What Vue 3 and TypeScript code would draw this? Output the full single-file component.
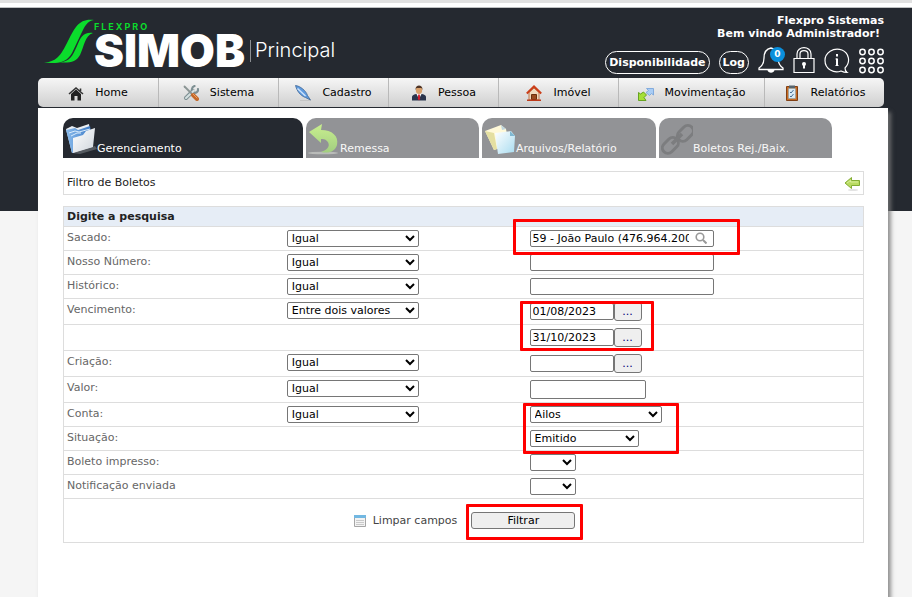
<script setup lang="ts">
import { ref } from 'vue'

type Mark = 'payer' | 'period' | 'account'
interface Row {
  id: string
  label: string
  compare?: string
  kind: 'search' | 'text' | 'date' | 'amount' | 'select'
  size?: 'large' | 'medium' | 'small'
  value: string
  tall?: boolean
  mark?: Mark
}

const menu = ['Home', 'Sistema', 'Cadastro', 'Pessoa', 'Imóvel', 'Movimentação', 'Relatórios']
const tabs = ['Gerenciamento', 'Remessa', 'Arquivos/Relatório', 'Boletos Rej./Baix.']
const operators = ['Igual', 'Diferente', 'Entre dois valores']

const initialRows = (): Row[] => [
  { id: 'sacado', label: 'Sacado:', compare: 'Igual', kind: 'search', value: '59 - João Paulo (476.964.200-00)', mark: 'payer' },
  { id: 'nosso', label: 'Nosso Número:', compare: 'Igual', kind: 'text', value: '' },
  { id: 'historico', label: 'Histórico:', compare: 'Igual', kind: 'text', value: '' },
  { id: 'vencimento', label: 'Vencimento:', compare: 'Entre dois valores', kind: 'date', value: '01/08/2023', tall: true, mark: 'period' },
  { id: 'vencimento-fim', label: '', kind: 'date', value: '31/10/2023', tall: true },
  { id: 'criacao', label: 'Criação:', compare: 'Igual', kind: 'date', value: '', tall: true },
  { id: 'valor', label: 'Valor:', compare: 'Igual', kind: 'amount', value: '', tall: true },
  { id: 'conta', label: 'Conta:', compare: 'Igual', kind: 'select', size: 'large', value: 'Ailos', mark: 'account' },
  { id: 'situacao', label: 'Situação:', kind: 'select', size: 'medium', value: 'Emitido' },
  { id: 'impresso', label: 'Boleto impresso:', kind: 'select', size: 'small', value: '' },
  { id: 'notificacao', label: 'Notificação enviada', kind: 'select', size: 'small', value: '' },
]

const rows = ref<Row[]>(initialRows())

function clearFields() {
  rows.value.forEach((row) => {
    row.value = ''
    if (row.compare) row.compare = 'Igual'
  })
}
</script>

<template>
  <div class="page">
    <header class="top">
      <div class="brand">
        <svg class="brand-mark" viewBox="0 0 52 44" aria-hidden="true">
          <path fill="#0bdc2c" d="M50 1C35-1 31 9 25 20C18 34 14 43 0 43.500C14 45 22 44 28 34L37 15C41 7 43 2 50 1Z" />
          <path fill="#0bdc2c" d="M49 14C39 13 37 18 33 27C28 38 26 42 16 43.500C27 44 32 43 36 36C40 28 41 16 49 14Z" />
        </svg>
        <div class="brand-words">
          <span class="brand-top">FLEXPRO</span>
          <span class="brand-name">SIMOB</span>
        </div>
        <span class="brand-bar"></span>
        <span class="brand-page">Principal</span>
      </div>
      <div class="user">
        <p class="user-text">Flexpro Sistemas</p>
        <p class="user-text user-hello">Bem vindo Administrador!</p>
        <div class="tools">
          <button class="pill" type="button">Disponibilidade</button>
          <button class="pill" type="button">Log</button>
          <button class="tool" type="button" aria-label="Notificações">
            <svg width="26" height="28" viewBox="0 0 26 28" fill="none" stroke="#fff" stroke-width="1.300">
              <path d="M13 2C8 3 6 7 6 12C6 17 4 20 1 22V23.500H25V22C22 20 20 17 20 12C20 7 18 3 13 2Z" />
              <path fill="#fff" stroke="none" d="M9.500 24H16.500C16 27.500 10 27.500 9.500 24Z" />
            </svg>
            <span class="badge">0</span>
          </button>
          <button class="tool" type="button" aria-label="Bloquear">
            <svg width="22" height="28" viewBox="0 0 22 28" fill="none" stroke="#fff">
              <path stroke-width="1.200" d="M1 12.500H21V26.500H1ZM4 12V8C4-.500 18-.500 18 8V12M7 12V8C7 3.500 15 3.500 15 8V12" />
              <circle cx="11" cy="18" r="2" fill="#fff" stroke="none" />
              <path stroke-width="2" d="M11 18V22.500" />
            </svg>
          </button>
          <button class="tool" type="button" aria-label="Informações">
            <svg width="26" height="26" viewBox="0 0 26 26" fill="none" stroke="#fff">
              <path stroke-width="1.200" d="M21 20C27 14 25 5 18 2C9-1 1 5 1 12.500C1 21 10 26 17 23C19 24 21 24.500 23 24.500C21 23 21 22 21 20Z" />
              <path stroke-width="2" d="M13 6V8.500M13 10.500V18" />
              <path d="M11.500 11H13M11.500 17.500H14.500" />
            </svg>
          </button>
          <button class="tool" type="button" aria-label="Aplicativos">
            <svg width="25" height="26" viewBox="0 0 25 26" fill="none" stroke="#fff" stroke-width="1.500">
              <template v-for="y in [4, 13, 22]" :key="y">
                <circle v-for="x in [3.500, 12.500, 21.500]" :key="x" :cx="x" :cy="y" r="2.700" />
              </template>
            </svg>
          </button>
        </div>
      </div>
    </header>

    <nav class="menu">
      <a v-for="(item, i) in menu" :key="item" class="menu-item" href="#">
        <svg class="menu-icon" viewBox="0 0 16 16" aria-hidden="true">
          <g v-if="i === 0">
            <path fill="#222" d="M3 9L8 4.500L13 9V15.500H9.500V11H6.500V15.500H3Z" />
            <path fill="none" stroke="#333" stroke-width="1.600" d="M1 9L8 3L15 9M12.500 3.500V6" />
          </g>
          <g v-else-if="i === 1" fill="none" stroke-linecap="round">
            <path stroke="#7d8f92" stroke-width="4" d="M3 13L10 6" />
            <path stroke="#7d8f92" stroke-width="2.200" d="M11.500 1C8.500 2 8 6 10.500 7.500C13 8.500 15.500 6.500 15 4" />
            <path stroke="#d5e1e1" stroke-width="2" d="M3 13L11 5.500" />
            <path stroke="#8b9594" stroke-width="1.800" d="M1.500 1.500L9 9" />
            <path stroke="#c3682a" stroke-width="4" d="M10 10L14 14" />
            <path stroke="#f0a15f" stroke-width="1" d="M10 9L14 13" />
          </g>
          <g v-else-if="i === 2">
            <path fill="#c5c5c5" d="M5 15H16V16H5Z" />
            <path fill="#5f9be0" stroke="#416896" stroke-width=".800" d="M.500.500C5 1 11 5.500 12.500 10.500L15.500 15L10.500 12.500C5 10.500 2 6 .500.500Z" />
            <path fill="none" stroke="#cfe4fb" stroke-width="1.400" d="M2.500 3.500L10.500 11" />
          </g>
          <g v-else-if="i === 3">
            <path fill="#29344c" d="M1 15.500V12Q1 10 5 9H11Q15 10 15 12V15.500Z" />
            <path fill="#fff" d="M5.500 9H10.500L8 14Z" />
            <path fill="#d1192b" d="M7.200 9.500H8.800L9.200 14L8 15.500L6.800 14Z" />
            <ellipse cx="8" cy="5" rx="3.200" ry="4" fill="#d9a06b" />
            <path fill="#4e3425" d="M4.500 5C4-1 12-1 11.500 5L10.500 3H5.500Z" />
          </g>
          <g v-else-if="i === 4">
            <path fill="#efd9bc" stroke="#be7950" d="M3 7.500L8 3L13 7.500V15H3Z" />
            <path fill="none" stroke="#cb3e19" stroke-width="2" d="M.800 8.500L8 1.500L15.200 8.500" />
            <path fill="#9a4c20" stroke="#6b300d" d="M5.500 9.500H10.500V14.500H5.500Z" />
            <path fill="#bd3a1a" d="M1 14.500H15V16H1Z" />
          </g>
          <g v-else-if="i === 5">
            <path fill="#a9cdf5" stroke="#7ba6da" stroke-width=".900" d="M8.500 3.500H15.500V10L13.500 8.500L11.500 10.500L8 7.500L10.500 5.500Z" />
            <path fill="#a5df38" stroke="#5c9c15" stroke-width=".900" d="M.500 7.500L2.500 9L5.500 7L8.500 10L6 12.500L8 15.500H.500Z" />
          </g>
          <g v-else>
            <path fill="#c76b22" stroke="#814015" d="M2.500 1.500H13.500V15.500H2.500Z" />
            <path fill="#d9ebf6" stroke="#8e9da3" stroke-width=".600" d="M4.500 3.500H11.500V13.500H4.500Z" />
            <path fill="#56646d" d="M5 .500H11V3H5Z" />
            <path fill="none" stroke="#456d92" d="M6 7L7 8L9.500 5M6 11L7 12L9.500 9" />
          </g>
        </svg>
        <span>{{ item }}</span>
      </a>
    </nav>

    <main class="panel">
      <div class="tabs" role="tablist">
        <button v-for="(tab, i) in tabs" :key="tab" class="tab" :class="{ active: i === 0 }" type="button" role="tab" :aria-selected="i === 0">
          <svg class="tab-icon" viewBox="0 0 32 32" aria-hidden="true">
            <defs>
              <linearGradient id="folder-front" x2="1" y2="1"><stop stop-color="#fff" /><stop offset="1" stop-color="#cfd5dc" /></linearGradient>
              <linearGradient id="folder-back" x2="1" y2="0"><stop stop-color="#8bbcec" /><stop offset="1" stop-color="#3675c4" /></linearGradient>
              <linearGradient id="sheet-blue" x2="1" y2="1"><stop stop-color="#fff" /><stop offset="1" stop-color="#a9dcf0" /></linearGradient>
              <linearGradient id="green-turn" x2="0" y2="1"><stop stop-color="#c9ef8f" /><stop offset="1" stop-color="#a2ce80" /></linearGradient>
            </defs>
            <g v-if="i === 0">
              <path fill="#555a60" d="M7 30L30 23L32 26L15 31Z" />
              <path fill="#e9eef4" d="M1 6L7 3L12 5L24 1L27 24L7 30Z" />
              <path fill="url(#folder-back)" d="M1 7L10 5L13 7L25 3L28 22L7 30Z" />
              <path fill="none" stroke="#d9ebfb" d="M4 10L10 8L14 9L25 6M6 13L12 10L16 10" />
              <path fill="url(#folder-front)" d="M8 15L18 12L21 8L30 5L28 24L8 30Z" />
            </g>
            <g v-else-if="i === 1">
              <ellipse cx="15" cy="30" rx="15" ry="1.300" fill="#b9bbb9" />
              <path fill="url(#green-turn)" d="M1 9L14 1L13 7C24 7 31 13 29 22C27 28 22 31 13 29C20 27 23 22 19 18C17 16 15 16 13 16V20Z" />
            </g>
            <g v-else-if="i === 2">
              <path fill="#fff9d9" d="M1 8L17 2L22 6L25 22L10 27Z" />
              <path fill="#e4dfa1" d="M1 8L10 27L13 26L10 10Z" />
              <path fill="url(#sheet-blue)" d="M11 10L27 8L31 13L30 29L14 31Z" />
              <path fill="#7fb8d2" d="M26 8L31 13L26 13Z" />
              <path fill="#bed5de" d="M17 2L22 6L18 7Z" />
            </g>
            <g v-else fill="none" stroke="#7c7d7f" stroke-width="3">
              <rect x="15" y="5" width="18" height="11" rx="5.500" transform="rotate(-45 24 10)" />
              <rect x="0" y="17" width="18" height="11" rx="5.500" transform="rotate(-45 9 22)" />
              <path stroke-width="3.500" d="M11 21L21 11" />
            </g>
          </svg>
          <span>{{ tab }}</span>
        </button>
      </div>

      <div class="title-box">
        <h1 class="title">Filtro de Boletos</h1>
        <a href="#" aria-label="Voltar" class="back">
          <svg width="16" height="16" viewBox="0 0 16 16">
            <ellipse cx="9" cy="14" rx="5" ry="1" fill="#e3e3e3" />
            <path fill="#b9db61" stroke="#83ad35" d="M1 7L7.500 1.500V4.500H15.500V9.500H7.500V12.500Z" />
            <path fill="none" stroke="#d9ef9c" d="M3 7L6.500 4.500V6H14" />
          </svg>
        </a>
      </div>

      <form @submit.prevent>
        <table class="filters">
          <colgroup>
            <col class="col-label" />
            <col class="col-compare" />
            <col />
          </colgroup>
          <thead>
            <tr><th colspan="3">Digite a pesquisa</th></tr>
          </thead>
          <tbody>
            <tr v-for="row in rows" :key="row.id" :class="{ tall: row.tall }">
              <td><label v-if="row.label" class="label" :for="row.id">{{ row.label }}</label></td>
              <td>
                <select v-if="row.compare" v-model="row.compare" class="control large" :aria-label="'Operador ' + row.label">
                  <option v-for="op in operators" :key="op">{{ op }}</option>
                </select>
              </td>
              <td>
                <div class="field">
                  <select v-if="row.kind === 'select'" :id="row.id" v-model="row.value" class="control" :class="row.size">
                    <option value=""></option>
                    <option v-if="row.size === 'large'">Ailos</option>
                    <option v-else-if="row.size === 'medium'">Emitido</option>
                    <template v-else>
                      <option>Sim</option>
                      <option>Não</option>
                    </template>
                  </select>
                  <input v-else :id="row.id" v-model="row.value" type="text" class="control" :class="row.kind" :aria-label="row.label ? undefined : 'Vencimento final'" />
                  <svg v-if="row.kind === 'search'" class="lens" viewBox="0 0 12 12" fill="none" stroke="#999" aria-hidden="true">
                    <circle cx="5" cy="5" r="3.800" stroke-width="1.600" />
                    <path stroke-width="2" d="M8 8L11.500 11.500" />
                  </svg>
                  <button v-if="row.kind === 'date'" class="picker" type="button" aria-label="Abrir calendário">...</button>
                  <span v-if="row.mark" class="mark" :class="'mark-' + row.mark"></span>
                </div>
              </td>
            </tr>
          </tbody>
          <tfoot>
            <tr>
              <td colspan="3">
                <div class="actions">
                  <button class="clear" type="button" @click="clearFields">
                    <svg width="12" height="12" viewBox="0 0 12 12" aria-hidden="true">
                      <path fill="#f3f3f3" stroke="#a5a5a5" d="M.500.500H11.500V11.500H.500Z" />
                      <path fill="#72b8e2" d="M0 0H12V3H0Z" />
                      <path stroke="#c9c9c9" d="M2 5.500H10M2 7.500H10M2 9.500H10" />
                    </svg>
                    <span>Limpar campos</span>
                  </button>
                  <div class="field">
                    <button class="submit" type="submit">Filtrar</button>
                    <span class="mark mark-submit"></span>
                  </div>
                </div>
              </td>
            </tr>
          </tfoot>
        </table>
      </form>
    </main>
  </div>
</template>

<style>
body {
  background: #f5f5f5;
}
</style>

<style scoped>
* {
  box-sizing: border-box;
}
.page {
  display: flex;
  flex-direction: column;
  min-height: 100vh;
  padding: 0 24px 0 38px;
  border-top: 3px solid #e1e1e1;
  background: linear-gradient(#fff 4px, #bfc1c3 4px, #bfc1c3 5px, #252930 5px) 0 0 / 100% 208px no-repeat #f5f5f5;
  font-family: Verdana, 'DejaVu Sans', sans-serif;
  font-size: 11px;
  line-height: 13px;
  color: #222;
}
button,
input,
select {
  font: inherit;
}
button {
  cursor: pointer;
}

/* Header */
.top {
  display: flex;
  justify-content: space-between;
  height: 75px;
  padding: 11px 4px 0 6px;
}
.brand {
  display: flex;
  align-items: flex-start;
  color: #fff;
  white-space: nowrap;
}
.brand-mark {
  width: 52px;
  height: 44px;
  margin-top: 5px;
}
.brand-words {
  display: flex;
  flex-direction: column;
  width: 153px;
  margin-left: -2px;
  padding-top: 8px;
}
.brand-top {
  font-family: Inter, sans-serif;
  font-size: 9px;
  font-weight: 700;
  line-height: 9px;
  letter-spacing: 2px;
  color: #0bdc2c;
}
.brand-name {
  font-family: Inter, sans-serif;
  font-size: 45px;
  font-weight: 900;
  line-height: 39px;
}
.brand-bar {
  width: 1px;
  height: 22px;
  margin: 26px 4px 0 3px;
  background: #8b8e92;
}
.brand-page {
  margin-top: 24px;
  font-family: Inter, sans-serif;
  font-size: 20px;
  font-weight: 300;
  line-height: 24px;
}
.user {
  display: flex;
  flex-direction: column;
  align-items: flex-end;
  color: #fff;
}
.user-text {
  margin: 0;
  font-weight: bold;
}
.user-hello {
  padding-right: 4px;
}
.tools {
  display: flex;
  align-items: flex-end;
  gap: 9px;
  margin-top: 6px;
}
.pill {
  height: 23px;
  padding: 0 3px;
  border: 1px solid #fff;
  border-radius: 12px;
  background: none;
  color: #fff;
  font-weight: bold;
}
.tool {
  position: relative;
  display: flex;
  padding: 0;
  border: 0;
  background: none;
}
.badge {
  position: absolute;
  top: 1px;
  right: -1px;
  width: 15px;
  height: 15px;
  border-radius: 8px;
  background: #0a8fdc;
  color: #fff;
  font-size: 9px;
  font-weight: bold;
  line-height: 15px;
}

/* Main menu */
.menu {
  display: grid;
  grid-template-columns: 121fr 120fr 110fr 110fr 120fr 146fr 119fr;
  height: 29px;
  margin-right: 4px;
  border-radius: 5px;
  background: linear-gradient(#f6f6f6, #cfcfcf);
}
.menu-item {
  display: flex;
  align-items: center;
  justify-content: center;
  gap: 11px;
  border-right: 1px solid #b9b9b9;
  color: #000;
  text-decoration: none;
}
.menu-item:last-child {
  border-right: 0;
}
.menu-icon {
  width: 16px;
  height: 16px;
}

/* Content */
.panel {
  flex: 1;
  margin-top: 1px;
  padding: 10px 24px 54px 25px;
  background: #fff;
  box-shadow: 3px 4px 4px rgba(120, 120, 120, 0.8);
}
.tabs {
  display: grid;
  grid-template-columns: 240fr 173fr 174fr 173fr 29fr;
  gap: 3px;
}
.tab {
  display: flex;
  align-items: flex-end;
  height: 40px;
  padding: 0 0 3px 2px;
  border: 0;
  border-radius: 10px 10px 0 0;
  background: #929396;
  color: #f8f8f8;
  white-space: nowrap;
}
.tab.active {
  background: #252930;
  color: #fff;
}
.tab-icon {
  width: 32px;
  height: 32px;
}
.title-box {
  display: flex;
  justify-content: space-between;
  height: 24px;
  margin: 13px 0 11px;
  padding: 4px 3px;
  border: 1px solid #ddd;
}
.title {
  margin: 0;
  font-size: 11px;
  font-weight: normal;
}
.back {
  display: flex;
}
.filters {
  width: 100%;
  table-layout: fixed;
  border: 1px solid #ddd;
  border-spacing: 0;
}
.col-label {
  width: 27.5%;
}
.col-compare {
  width: 30.4%;
}
.filters th {
  height: 20px;
  padding: 0 3px;
  border-bottom: 1px solid #ddd;
  background: #e6edf6;
  text-align: left;
}
.filters td {
  height: 24px;
  padding: 3px 3px 0;
  border-bottom: 1px solid #ddd;
  vertical-align: top;
}
.filters .tall td {
  height: 26px;
}
.filters tfoot td {
  height: 43px;
  padding: 0;
  border-bottom: 0;
  vertical-align: middle;
}
.label {
  display: block;
  line-height: 15px;
  color: #666;
}
.field {
  position: relative;
  display: flex;
  align-items: center;
  width: max-content;
}
.control {
  display: block;
  height: 17px;
  margin: 0;
  padding: 0 2px;
  border: 1px solid #767676;
  border-radius: 2px;
  background-color: #fff;
  color: #000;
}
select.control {
  padding: 0;
}
.large {
  width: 132px;
}
.medium {
  width: 109px;
}
.small {
  width: 46px;
}
.text,
.search {
  width: 184px;
}
.search {
  padding-right: 24px;
}
.date {
  width: 84px;
}
.amount {
  width: 116px;
  height: 19px;
}
.lens {
  position: absolute;
  top: 2px;
  right: 7px;
  width: 12px;
  height: 12px;
}
.picker {
  width: 28px;
  height: 19px;
  padding: 0;
  border: 1px solid #767676;
  border-radius: 3px;
  background: #efefef;
  color: #00007a;
}
.actions {
  display: flex;
  align-items: center;
  justify-content: center;
  gap: 14px;
  padding-left: 2px;
}
.clear {
  display: flex;
  align-items: center;
  gap: 7px;
  padding: 0;
  border: 0;
  background: none;
  color: #444;
}
.submit {
  width: 104px;
  height: 17px;
  padding: 0;
  border: 1px solid #767676;
  border-radius: 3px;
  background: #efefef;
  color: #000;
}

/* Red frames laid over the fields to call attention to them */
.mark {
  position: absolute;
  z-index: 1;
  border: 3px solid #f00;
  border-radius: 1px;
  pointer-events: none;
}
.mark-payer {
  top: -11px;
  left: -17px;
  width: 227px;
  height: 36px;
}
.mark-period {
  top: -1px;
  left: -10px;
  width: 134px;
  height: 50px;
}
.mark-account {
  top: -3px;
  left: -7px;
  width: 156px;
  height: 51px;
}
.mark-submit {
  top: -8px;
  left: -5px;
  width: 117px;
  height: 36px;
}
</style>
